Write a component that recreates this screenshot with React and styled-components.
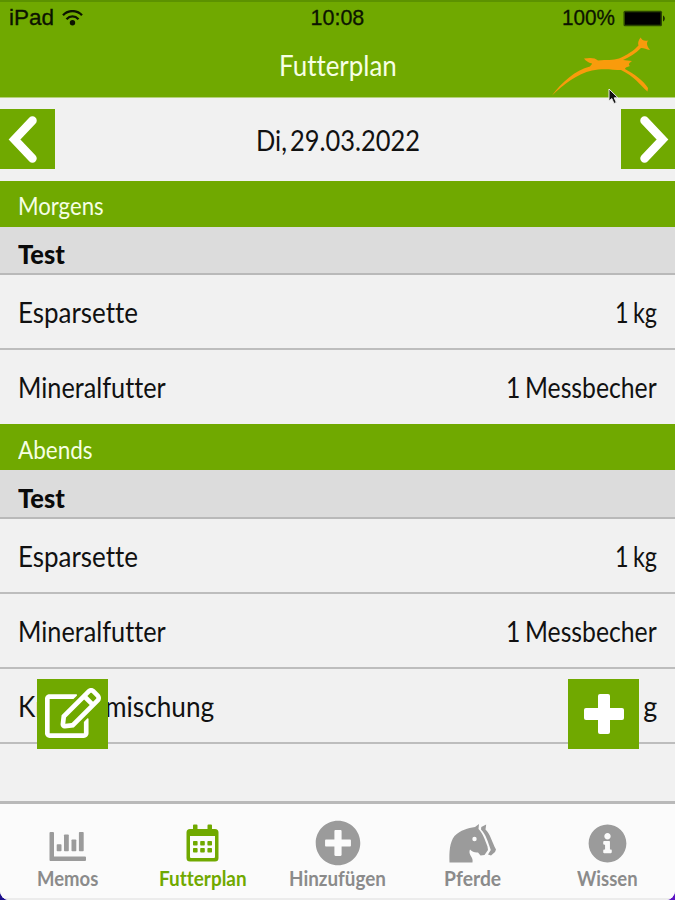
import React, { useLayoutEffect, useRef, useState } from "react";
import styled, { createGlobalStyle, css } from "styled-components";
import { FaInfoCircle, FaPlusCircle, FaRegEdit } from "react-icons/fa";

const COLORS = {
  green: "#70a900",
  greenDark: "#5c9200",
  orange: "#f99b0c",
  page: "#f1f1f1",
  sub: "#dcdcdc",
  line: "#b9b9b9",
  grey: "#9b9b9b",
  label: "#8b8b8b",
};

const GlobalStyle = createGlobalStyle`
  * { box-sizing: border-box; }
  body {
    margin: 0;
    background: linear-gradient(90deg, #1c0f8c 50%, #5b12c4 50%);
    font-family: Lato, "Open Sans", sans-serif;
    font-variant-ligatures: none;
  }
`;

const Screen = styled.div`
  position: relative;
  display: flex;
  flex-direction: column;
  width: 675px;
  height: 900px;
  overflow: hidden;
  background: ${COLORS.page};
  border-radius: 0 0 9px 9px;
`;

const Header = styled.header`
  position: relative;
  height: 98px;
  background: ${COLORS.green};
  border-top: 2px solid ${COLORS.greenDark};
  border-bottom: 1px solid #b5d17b;
`;

const StatusBar = styled.div`
  display: grid;
  grid-template-columns: 1fr auto 1fr;
  align-items: center;
  height: 32px;
  padding: 0 9px;
  font-family: "Liberation Sans", Arial, sans-serif;
  font-size: 21.5px;
  color: #0c1400;
  -webkit-text-stroke: 0.3px #0c1400;
`;

const StatusGroup = styled.div`
  display: flex;
  align-items: center;
  justify-content: ${(props) => (props.$end ? "flex-end" : "flex-start")};
  gap: 8px;
`;

const Title = styled.h1`
  display: flex;
  justify-content: center;
  margin: 0;
  font-size: 29px;
  font-weight: 400;
  line-height: 62px;
  color: #f6ffe4;
`;

const Logo = styled.svg`
  position: absolute;
  top: 34px;
  right: 22px;
`;

const Cursor = styled.svg`
  position: absolute;
  top: 88px;
  left: 608px;
`;

const DateBar = styled.div`
  display: flex;
  align-items: center;
  justify-content: space-between;
  height: 83px;
  padding-bottom: 1px;
  font-size: 29px;
  word-spacing: -4px;
  color: #111;
`;

const NavButton = styled.button`
  display: flex;
  align-items: center;
  justify-content: center;
  width: ${(props) => (props.$narrow ? "54px" : "55px")};
  height: 60px;
  padding: 0;
  border: 0;
  background: ${COLORS.green};
`;

const SectionHead = styled.div`
  display: flex;
  height: 46px;
  padding: 0 18px;
  background: ${COLORS.green};
  color: #f6ffe4;
  font-size: 25.5px;
  line-height: ${(props) => (props.$tall ? "51px" : "49px")};
`;

const SubHead = styled.div`
  display: flex;
  height: ${(props) => (props.$tall ? "49px" : "48px")};
  padding: 0 18px;
  background: ${COLORS.sub};
  border-bottom: 2px solid ${COLORS.line};
  font-size: 26.5px;
  font-weight: 900;
  line-height: ${(props) => (props.$tall ? "57px" : "55px")};
  color: #0a0a0a;
`;

const Row = styled.div`
  display: flex;
  justify-content: space-between;
  height: ${(props) => (props.$last ? "74px" : "75px")};
  padding: 0 18px;
  font-size: 29px;
  line-height: 74px;
  word-spacing: -2px;
  color: #111;
  ${(props) =>
    !props.$last &&
    css`
      border-bottom: 2px solid #bdbdbd;
    `}
`;

const FloatButton = styled.button`
  position: absolute;
  top: 679px;
  ${(props) => (props.$side === "left" ? "left: 37px;" : "right: 36px;")}
  display: flex;
  align-items: center;
  justify-content: center;
  width: 71px;
  height: 70px;
  padding: ${(props) => (props.$side === "left" ? "0 0 3px 1px" : "0")};
  border: 0;
  background: ${COLORS.green};
  color: #fff;
`;

const TabBar = styled.nav`
  display: grid;
  grid-template-columns: repeat(5, 1fr);
  height: 99px;
  margin-top: auto;
  background: #fbfbfb;
  border-top: 3px solid ${COLORS.line};
  border-bottom: 2px solid #ececec;
`;

const Tab = styled.div`
  display: flex;
  flex-direction: column;
  align-items: center;
  color: ${(props) => (props.$active ? COLORS.green : COLORS.grey)};
`;

const TabIcon = styled.div`
  display: flex;
  align-items: center;
  justify-content: center;
  height: 46px;
  margin-top: 16px;
`;

const TabLabel = styled.div`
  font-size: 20px;
  font-weight: 700;
  line-height: 24px;
  color: ${(props) => (props.$active ? COLORS.green : COLORS.label)};
`;

const Condensed = styled.span`
  display: inline-block;
  white-space: nowrap;
  transform-origin: 0 50%;
`;

const Slot = styled.span`
  display: block;
  white-space: nowrap;
`;

// Squeezes a label horizontally so that it takes exactly `width` pixels.
const Fit = ({ width, children }) => {
  const ref = useRef();
  const [scale, setScale] = useState(1);

  useLayoutEffect(() => {
    setScale(width / ref.current.offsetWidth);
  }, [width, children]);

  return (
    <Slot style={{ width }}>
      <Condensed ref={ref} style={{ transform: `scaleX(${scale})` }}>{children}</Condensed>
    </Slot>
  );
};

const Wifi = () => (
  <svg width="21" height="17" viewBox="0 0 21 17" fill="none" stroke="#0c1400" strokeWidth="2.3">
    <path d="M1 5.200C6.300 -.3 14.700 -.3 20 5.200" />
    <path d="M4.500 9.200C8 5.500 13 5.500 16.500 9.200" />
    <circle cx="10.500" cy="12.800" r="2.700" fill="#0c1400" stroke="none" />
  </svg>
);

const Battery = () => (
  <svg width="43" height="17" viewBox="0 0 43 17">
    <rect x=".5" y=".7" width="38.500" height="15.600" rx="1.500" fill="#2b4600" />
    <rect x="2" y="2.300" width="35.500" height="12.400" fill="#000" />
    <path d="M40 5.500c2.400.8 2.400 5.200 0 6z" fill="#1c2e00" />
  </svg>
);

const Horse = () => (
  <Logo width="101" height="62" viewBox="552 36 101 62">
    <path
      fill={COLORS.orange}
      d="M552 95.500C562 82 575 70.500 590 66.500C591 65 592 64.500 592 63.500C588 62.500 586 61 584 58.500C590 57.500 595 57.500 598 60.500C607 59.500 613 60.500 619 58.500C627 55 634 50.500 638.500 45.500C637.500 42 639 40 640.500 37.500C642 40 644 41.500 648.500 40.500C645.500 42.500 647.500 47 650 50C646 49 643 47.500 641 48C636 53 629 57.500 623 60L632 61C629 63 628 64.500 630 66C627 67 625 67.500 625 69C634 74 644 81 648 88L647.500 91.500C640 85 634 76 621 70C613 70 603 68 592 70.500C577 74 564 84 552 95.500Z"
    />
  </Logo>
);

const Chevron = ({ right }) => (
  <svg width="54" height="60" viewBox="0 0 54 60" fill="none" stroke="#fff" strokeWidth="8.500" strokeLinecap="round" strokeLinejoin="miter">
    <path d={right ? "M23.500 11.500L41.500 30.500L23.500 49.500" : "M31.500 11.500L13.500 30.500L31.500 49.500"} />
  </svg>
);

const Plus = () => (
  <svg width="40" height="40" viewBox="0 0 40 40" fill="#fff">
    <rect x="14" y="0" width="12" height="40" rx="2" />
    <rect x="0" y="14" width="40" height="12" rx="2" />
  </svg>
);

const Bars = () => (
  <svg width="37" height="38" viewBox="0 0 37 38" fill="currentColor">
    <g transform="translate(.5 4)">
      <path d="M1 4h2.500q1 0 1 1v23.500H35.500q1 0 1 1V32q0 1-1 1H1q-1 0-1-1V5q0-1 1-1z" />
      <rect x="7.200" y="16.300" width="4.800" height="7" rx=".8" />
      <rect x="14.500" y="6.500" width="4.800" height="16.800" rx=".8" />
      <rect x="22" y="11.500" width="4.800" height="11.800" rx=".8" />
      <rect x="29.400" y="4" width="4.800" height="19.300" rx=".8" />
    </g>
  </svg>
);

const Calendar = () => (
  <svg width="33" height="38" viewBox="0 0 33 38" fill="currentColor">
    <path fillRule="evenodd" d="M4 5h3V1.500a1 1 0 0 1 1-1h2.500a1 1 0 0 1 1 1V5h10V1.500a1 1 0 0 1 1-1H25a1 1 0 0 1 1 1V5h3q3.500 0 3.500 3.500v25.500q0 3.500-3.500 3.500H4Q.5 37.500.5 34V8.500Q.5 5 4 5zM4 12v21q0 1 1 1h23q1 0 1-1V12z" />
    {[17, 24].map((y) => [7, 14.2, 21.4].map((x) => <rect key={`${x}-${y}`} x={x} y={y} width="4.600" height="4.600" rx=".8" />))}
  </svg>
);

const HorseHead = () => (
  <svg width="48" height="39" viewBox="0 0 48 39" fill="currentColor">
    <path
      fillRule="evenodd"
      d="M.5 38.500C.2 28 .5 18.500 5.500 12C11.500 6 19 4 26 3L30 0L29.500 5C34 9.500 36 16 38.500 22.500L39 26L35.500 31L31.500 31.500L29 28.500C26 29 23 27.500 21 25.500C19.500 29 21.500 31 23 34Q24 36 23.500 38.500ZM25.500 12.800a2.200 2.200 0 1 0 0 4.400a2.200 2.200 0 1 0 0-4.400z"
    />
    <path d="M32.300 3L37.200 .5L36.500 5.500C41 9.500 43 18 47 25.500L46 28L42 31.500L39 30.500L41.800 26C39 18 37 10.500 32 5.500Z" />
  </svg>
);

const sections = [
  {
    name: "Morgens",
    width: 86,
    items: [
      { name: "Esparsette", width: 120, amount: "1 kg", amountWidth: 42 },
      { name: "Mineralfutter", width: 148, amount: "1 Messbecher", amountWidth: 151, last: true },
    ],
  },
  {
    name: "Abends",
    width: 75,
    tall: true,
    items: [
      { name: "Esparsette", width: 120, amount: "1 kg", amountWidth: 42 },
      { name: "Mineralfutter", width: 148, amount: "1 Messbecher", amountWidth: 151 },
      { name: "Kräutermischung", width: 196, amount: "50 g", amountWidth: 50 },
    ],
  },
];

const tabs = [
  { name: "Memos", width: 61, icon: <Bars /> },
  { name: "Futterplan", width: 88, icon: <Calendar />, active: true },
  { name: "Hinzufügen", width: 97, icon: <FaPlusCircle size={46} /> },
  { name: "Pferde", width: 57, icon: <HorseHead /> },
  { name: "Wissen", width: 61, icon: <FaInfoCircle size={39} /> },
];

const App = () => {
  return (
    <>
      <GlobalStyle />
      <Screen>
        <Header>
          <StatusBar>
            <StatusGroup>
              <Fit width={45}>iPad</Fit>
              <Wifi />
            </StatusGroup>
            <Fit width={54}>10:08</Fit>
            <StatusGroup $end>
              <Fit width={53}>100%</Fit>
              <Battery />
            </StatusGroup>
          </StatusBar>
          <Title><Fit width={118}>Futterplan</Fit></Title>
          <Horse />
        </Header>
        <DateBar>
          <NavButton aria-label="Vorheriger Tag"><Chevron /></NavButton>
          <Fit width={164}>Di, 29.03.2022</Fit>
          <NavButton $narrow aria-label="Nächster Tag"><Chevron right /></NavButton>
        </DateBar>
        {sections.map((section) => (
          <React.Fragment key={section.name}>
            <SectionHead $tall={section.tall}><Fit width={section.width}>{section.name}</Fit></SectionHead>
            <SubHead $tall={section.tall}><Fit width={47}>Test</Fit></SubHead>
            {section.items.map((item) => (
              <Row key={item.name} $last={item.last}>
                <Fit width={item.width}>{item.name}</Fit>
                <Fit width={item.amountWidth}>{item.amount}</Fit>
              </Row>
            ))}
          </React.Fragment>
        ))}
        <TabBar>
          {tabs.map((tab) => (
            <Tab key={tab.name} $active={tab.active}>
              <TabIcon>{tab.icon}</TabIcon>
              <TabLabel $active={tab.active}><Fit width={tab.width}>{tab.name}</Fit></TabLabel>
            </Tab>
          ))}
        </TabBar>
        <FloatButton $side="left" aria-label="Bearbeiten"><FaRegEdit size={56} /></FloatButton>
        <FloatButton $side="right" aria-label="Hinzufügen"><Plus /></FloatButton>
        <Cursor width="11" height="17" viewBox="0 0 11 17">
          <path d="M1 1V13L3.800 10.500L6 15.500L8.300 14.500L6.200 9.800H10Z" fill="#111" stroke="#e8e8e8" strokeWidth="1" />
        </Cursor>
      </Screen>
    </>
  );
};

export default App;
